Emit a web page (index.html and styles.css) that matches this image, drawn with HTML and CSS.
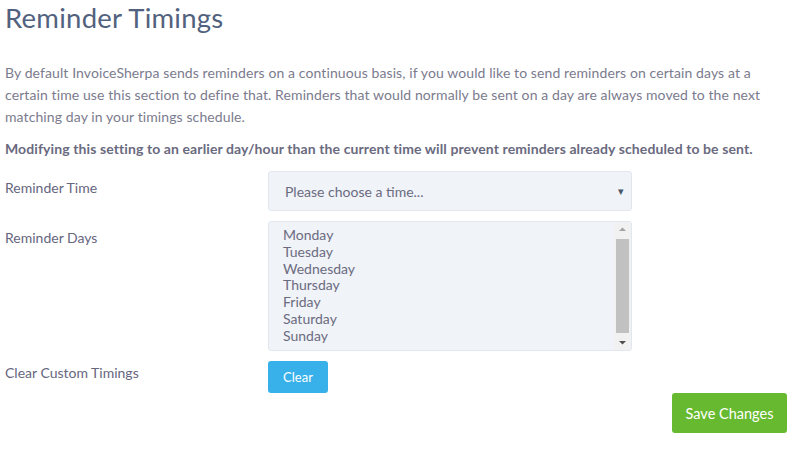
FILE: index.html
```html
<!DOCTYPE html>
<html>
<head>
<meta charset="utf-8">
<link rel="stylesheet" href="styles.css">
</head>
<body>
<div class="page">
  <h1 class="title">Reminder Timings</h1>
  <p class="intro">By default InvoiceSherpa sends reminders on a continuous basis, if you would like to send reminders on certain days at a certain time use this section to define that. Reminders that would normally be sent on a day are always moved to the next matching day in your timings schedule.</p>
  <p class="warning">Modifying this setting to an earlier day/hour than the current time will prevent reminders already scheduled to be sent.</p>

  <div class="row row-time">
    <div class="label">Reminder Time</div>
    <div class="control">
      <div class="select">
        <span class="select-text">Please choose a time...</span>
        <span class="caret">&#9662;</span>
      </div>
    </div>
  </div>

  <div class="row row-days">
    <div class="label">Reminder Days</div>
    <div class="control">
      <div class="listbox">
        <ul class="options">
          <li>Monday</li>
          <li>Tuesday</li>
          <li>Wednesday</li>
          <li>Thursday</li>
          <li>Friday</li>
          <li>Saturday</li>
          <li>Sunday</li>
        </ul>
        <div class="scrollbar">
          <svg class="arrow" width="17" height="14" viewBox="0 0 17 14"><path d="M5 9 L8.5 5.5 L12 9 Z" fill="#a3a3a3"/></svg>
          <div class="thumb"></div>
          <svg class="arrow" width="17" height="14" viewBox="0 0 17 14"><path d="M5 5 L8.5 8.5 L12 5 Z" fill="#505050"/></svg>
        </div>
      </div>
    </div>
  </div>

  <div class="row row-clear">
    <div class="label">Clear Custom Timings</div>
    <div class="control">
      <button class="btn btn-clear">Clear</button>
    </div>
  </div>

  <div class="actions">
    <button class="btn btn-save">Save Changes</button>
  </div>
</div>
</body>
</html>
```

FILE: styles.css
```css
* { box-sizing: border-box; }
html, body { margin: 0; padding: 0; background: #fff; }
body {
  font-family: "Lato", "Open Sans", sans-serif;
  color: #71718a;
}
.page {
  padding: 0 7px 0 5px;
  width: 794px;
}
.title {
  margin: 0;
  padding-top: 2px;
  font-weight: 400;
  font-size: 27.5px;
  line-height: 32px;
  color: #52627e;
  letter-spacing: 0.25px;
}
.intro {
  margin: 28px 0 0 0;
  font-size: 14px;
  line-height: 22px;
  color: #7b7b8e;
  letter-spacing: 0.1px;
}
.warning {
  margin: 10px 0 0 0;
  font-size: 14px;
  line-height: 22px;
  font-weight: 700;
  color: #6a6a80;
  letter-spacing: 0.1px;
}
.row {
  display: flex;
}
.label {
  width: 263px;
  font-size: 14px;
  color: #66667e;
  flex: none;
}
.control { width: 364px; }
.row-time { margin-top: 11px; }
.row-time .label { padding-top: 8px; }
.select {
  height: 40px;
  border: 1px solid #e2e6ee;
  border-radius: 3px;
  background: #f0f3f8;
  display: flex;
  align-items: center;
  justify-content: space-between;
  padding: 0 7px 0 16px;
  font-size: 14px;
  color: #6b6b80;
}
.caret { font-size: 11px; color: #4a5568; }
.row-days { margin-top: 10px; }
.row-days .label { padding-top: 8px; }
.listbox {
  height: 130px;
  border: 1px solid #e2e6ee;
  border-radius: 3px;
  background: #f0f3f8;
  display: flex;
  justify-content: space-between;
  overflow: hidden;
}
.options {
  list-style: none;
  margin: 0;
  padding: 5px 0 0 14px;
  font-size: 14px;
  line-height: 16.8px;
  color: #6b6b80;
}
.scrollbar {
  width: 17px;
  background: #f1f1f1;
  display: flex;
  flex-direction: column;
}
.arrow { display: block; flex: none; }
.thumb {
  flex: 1;
  background: #c1c1c1;
  margin: 3px 2px 3px 2px;
}
.row-clear { margin-top: 10px; }
.row-clear .label { padding-top: 3px; }
.btn {
  border: 0;
  border-radius: 3px;
  color: #fff;
  font-family: "Lato", "Open Sans", sans-serif;
  cursor: pointer;
}
.btn-clear {
  width: 60px;
  height: 32px;
  background: #38b1ea;
  font-size: 13px;
}
.actions {
  display: flex;
  justify-content: flex-end;
}
.btn-save {
  width: 115px;
  height: 40px;
  background: #67ba2f;
  font-size: 14.5px;
}
```
